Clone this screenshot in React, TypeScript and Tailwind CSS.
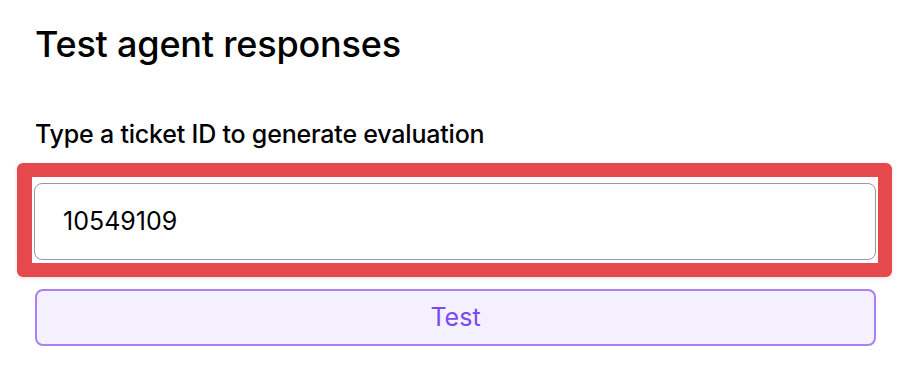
export default function App() {
  return (
    <div
      className="w-[902px] h-[382px] bg-white pl-[35px] pr-[26px] text-black"
      style={{ fontFamily: 'Inter, "Noto Sans", sans-serif' }}
    >
      <h1 className="pt-[22px] text-[36px] leading-[44px] font-medium tracking-[-0.2px]">
        Test agent responses
      </h1>
      <label className="block mt-[53px] text-[25px] leading-[30px] font-medium tracking-[-0.2px]">
        Type a ticket ID to generate evaluation
      </label>
      <div className="mt-[14px] -ml-[18px] w-[875px] h-[114px] border-t-[14px] border-b-[14px] border-l-[15px] border-r-[14px] border-[#e5484d] rounded-md shadow-[0_1px_4px_rgba(0,0,0,0.12)] pt-[6px] pb-[3px] px-[2px] bg-white">
        <div className="h-full w-full rounded-lg border border-[#9a98a4] flex items-center pl-[28px] text-[25px] text-black">
          10549109
        </div>
      </div>
      <button className="mt-[12px] w-[841px] h-[57px] rounded-lg border-2 border-[#ab80f7] bg-[#f5f0fd] text-[25px] text-[#7a4cf0]">
        Test
      </button>
    </div>
  );
}
